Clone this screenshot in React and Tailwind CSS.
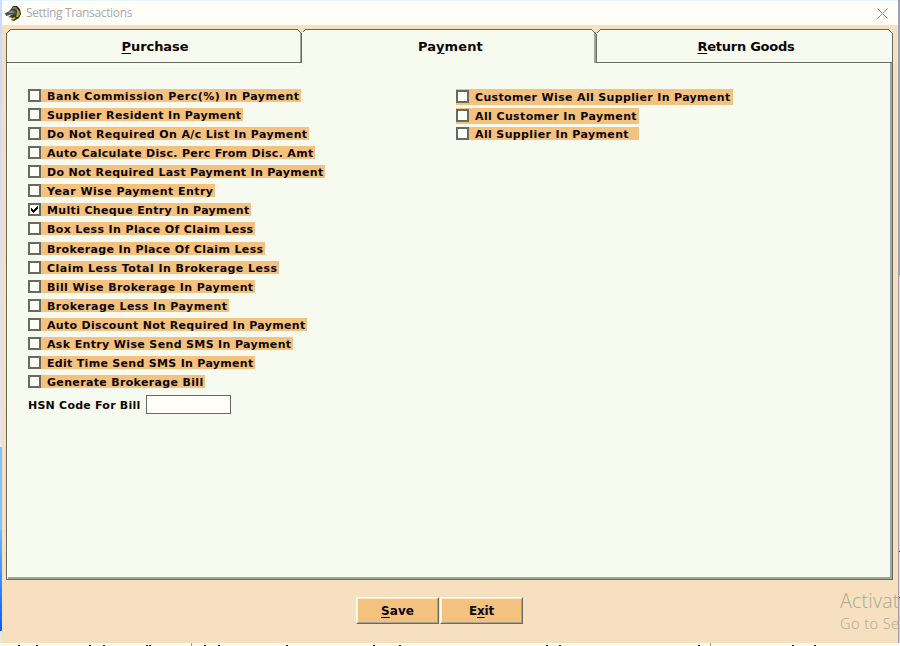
import { useLayoutEffect, useRef } from "react";

// Single line of text whose letter spacing is computed to fill a given width.
function Fit({ width, children, className = "" }) {
  const ref = useRef(null);
  useLayoutEffect(() => {
    const el = ref.current;
    el.style.letterSpacing = "0px";
    const natural = el.getBoundingClientRect().width;
    el.style.letterSpacing = (width - natural) / el.textContent.length + "px";
  }, [width]);
  return (
    <span ref={ref} className={"inline-block whitespace-pre " + className}>
      {children}
    </span>
  );
}

const LEFT = [
  ["Bank Commission Perc(%) In Payment", 301],
  ["Supplier Resident In Payment", 243],
  ["Do Not Required On A/c List In Payment", 309],
  ["Auto Calculate Disc. Perc From Disc. Amt", 315],
  ["Do Not Required Last Payment In Payment", 325],
  ["Year Wise Payment Entry", 215],
  ["Multi Cheque Entry In Payment", 251, true],
  ["Box Less In Place Of Claim Less", 255],
  ["Brokerage In Place Of Claim Less", 265],
  ["Claim Less Total In Brokerage Less", 279],
  ["Bill Wise Brokerage In Payment", 255],
  ["Brokerage Less In Payment", 229],
  ["Auto Discount Not Required In Payment", 307],
  ["Ask Entry Wise Send SMS In Payment", 293],
  ["Edit Time Send SMS In Payment", 255],
  ["Generate Brokerage Bill", 205],
];

function Box({ checked }) {
  return (
    <span className="flex h-[13px] w-[13px] shrink-0 border-2 border-[#666a5f] bg-[#fffff8]">
      {checked && (
        <svg viewBox="0 0 9 9" className="h-[9px] w-[9px]" shapeRendering="crispEdges">
          <path d="M1 3h1v1h1v1h1v-1h1v-1h1v-1h1v-1h1v3h-1v1h-1v1h-1v1h-1v1h-1v-1h-1v-1h-1z" fill="#000" />
        </svg>
      )}
    </span>
  );
}

function Check({ label, width, checked, className = "", textWidth, boxClass = "" }) {
  return (
    <label
      className={"flex shrink-0 bg-[#f4c17e] text-[11px] leading-[13px] " + className}
      style={{ width }}
    >
      <span className={"flex " + boxClass}>
        <Box checked={checked} />
        <Fit width={textWidth} className="ml-[6px] pt-px">{label}</Fit>
      </span>
    </label>
  );
}

function Tab({ children, className, width }) {
  return (
    <div className={"flex h-[34px] shrink-0 justify-center pt-[10px] pl-[1px] text-[13px] leading-4 " + className}>
      <Fit width={width}>{children}</Fit>
    </div>
  );
}

const U = ({ children }) => (
  <span className="underline decoration-1 underline-offset-2">{children}</span>
);

function Button({ children, width, className }) {
  return (
    <button className={"flex h-[27px] justify-center border border-t-[#fffff0] border-l-[#fffff0] border-r-[#666a5f] border-b-[#666a5f] bg-[#f4c17e] " + className}>
      <span className="flex h-full w-full justify-center border border-t-[#f5eedb] border-l-[#f5eedb] border-r-[#a2a69a] border-b-[#a2a69a] pt-[5px] text-xs leading-[14px]">
        <Fit width={width}>{children}</Fit>
      </span>
    </button>
  );
}

export default function App() {
  return (
    <div className="relative flex h-[646px] w-[900px] flex-col overflow-hidden bg-[#f7faef] font-['DejaVu_Sans',sans-serif] font-bold text-[#0c0504]">
      <div className="flex h-[643px]">
        <div className="flex w-[2px] shrink-0 flex-col">
          <div className="h-[447px] bg-linear-to-b from-[#c9dbff] to-[#e5e5f5]" />
          <div className="h-[83px] bg-[#7fc4fb]" />
          <div className="h-[101px] bg-linear-to-b from-[#68b9fb] to-[#1557ec]" />
          <div className="flex-1 bg-[#e5e9e5]" />
        </div>
        <div className="flex w-[896px] shrink-0 flex-col bg-[#f6e0bf]">
          <header className="flex h-[25px] shrink-0 items-center border-t border-[#e9f8fc] bg-[#fffff8] pl-[3px]">
            <svg width="17" height="17" viewBox="0 0 17 17">
              <path d="M6 4l2-3 4 0 3 3 1 5-2 4-5 3-3-1 2-2-3-3z" fill="#34331d" />
              <path d="M0 8l3-1 3-3 4 1 2 3-2 2H5L1 11z" fill="#4b514e" />
              <path d="M3 12l5-2 3 1-3 2z" fill="#3a3c32" />
              <path d="M3 7l4-1 3 1-4 1zM4 9h4l-2 1z" fill="#9ca399" />
              <path d="M8 2l3 0 2 3-1 1-2-2-3 0z" fill="#777b68" />
              <path d="M12 4l2 2 1 3-2 3-2 0 1-4z" fill="#b4aa25" />
              <path d="M6 14l3-2 2 1-3 2z" fill="#bcb13c" />
            </svg>
            <span className="ml-1 font-['Open_Sans',sans-serif] text-xs leading-4 font-normal text-[#aaa6b0]">
              <Fit width={106}>Setting Transactions</Fit>
            </span>
            <svg className="mr-[10px] ml-auto" width="11" height="11" viewBox="0 0 11 11">
              <path d="M.5 .5l10 10M10.500 .5l-10 10" stroke="#819292" fill="none" />
            </svg>
          </header>

          <main className="relative mt-1 ml-1 flex h-[551px] w-[887px] shrink-0 flex-col">
            <svg className="pointer-events-none absolute inset-0" width="887" height="551" fill="none" shapeRendering="crispEdges">
              <path d="M0 550V4L4 0H291L295 4L299 0H586L590 4L594 0H883L887 4V551H0Z" fill="#f7faef" />
              <path d="M1.500 549V35.500H296" stroke="#fffff8" />
              <path d="M590.500 34.500H886" stroke="#fffff8" />
              <path d="M2 549H886M885 550V34M589 34V3" stroke="#a2a69a" strokeWidth="2" />
              <path d="M.5 550.500V4.500L4.500 .5H291.500L295.500 4.500V33.500H.5" stroke="#666a5f" />
              <path d="M296.500 3.500L299.500 .5H585.500L590.500 5.500V33.500H886" stroke="#666a5f" />
              <path d="M590.500 4.500L594.500 .5H882.500L886.500 4.500V550.500H.5" stroke="#666a5f" />
              <path d="M294.500 4V33" stroke="#a2a69a" />
            </svg>

            <nav className="relative flex h-[34px] shrink-0">
              <Tab className="w-[297px]" width={67}><U>P</U>urchase</Tab>
              <Tab className="w-[294px]" width={65}>Pa<U>y</U>ment</Tab>
              <Tab className="w-[297px]" width={97}><U>R</U>eturn Goods</Tab>
            </nav>

            <div className="relative flex pt-[26px] pl-[22px]">
              <div className="flex w-[428px] shrink-0 flex-col">
                {LEFT.map(([label, end, checked], i) => (
                  <Check
                    key={label}
                    label={label}
                    checked={checked}
                    width={end - 28}
                    textWidth={end - 48.5}
                    className={i === 7 ? "mb-[7px] h-[13px]" : "mb-[6px] h-[13px]"}
                  />
                ))}
                <div className="mt-[1px] flex items-center text-[11px] leading-[13px]">
                  <span className="w-[118px] pt-px"><Fit width={112.5}>HSN Code For Bill</Fit></span>
                  <input className="h-[19px] w-[85px] border border-[#666a5f] bg-[#fffff8]" />
                </div>
              </div>
              <div className="flex flex-col">
                <Check label="Customer Wise All Supplier In Payment" width={277} textWidth={255.5} className="mb-[3px] h-[16px]" boxClass="pt-[1px]" />
                <Check label="All Customer In Payment" width={183} textWidth={162} className="mb-[3px] h-[16px]" boxClass="pt-[1px]" />
                <Check label="All Supplier In Payment" width={183} textWidth={154} className="h-[13px]" />
              </div>
            </div>
          </main>

          <footer className="mt-[17px] flex pl-[354px]">
            <Button className="mr-[1px] w-[83px]" width={33}><U>S</U>ave</Button>
            <Button className="w-[83px]" width={25}>E<U>x</U>it</Button>
          </footer>
        </div>
        <div className="flex w-[2px] shrink-0 flex-col border-l border-[#a39caf]">
          <div className="h-[275px] bg-[#79a9ee]" />
          <div className="h-[276px] bg-[#d7def7]" />
          <div className="h-px bg-[#303642]" />
          <div className="h-[45px] bg-[#e8e2ea]" />
          <div className="h-px bg-[#303642]" />
          <div className="flex-1 bg-[#cecdf0]" />
        </div>
      </div>

      <div className="h-[3px] bg-[#f8fbef]">
        <svg width="900" height="3" className="block" shapeRendering="crispEdges">
          <path d="M191.500 0V3M710.500 0V3" stroke="#a2a69a" />
          <path d="M18 2.500h2M36 2.500h2M89 2.500h2M103 2.500h2M146 2.500h2M149 2.500h2M204 2.500h2M218 2.500h2M286 2.500h2M373 2.500h2M399 2.500h2M546 2.500h2M559 2.500h2M698 2.500h2M792 2.500h2M814 2.500h2" stroke="#20252b" />
        </svg>
      </div>

      <div className="absolute top-[589px] left-[840px] whitespace-nowrap font-['Open_Sans',sans-serif] font-light text-[#aaa893]">
        <div className="text-[19.500px] leading-[24px]"><Fit width={59.5}>Activat</Fit></div>
        <div className="mt-[2px] text-[14.500px] leading-[18px]"><Fit width={59.5}>Go to Se</Fit></div>
      </div>
    </div>
  );
}
